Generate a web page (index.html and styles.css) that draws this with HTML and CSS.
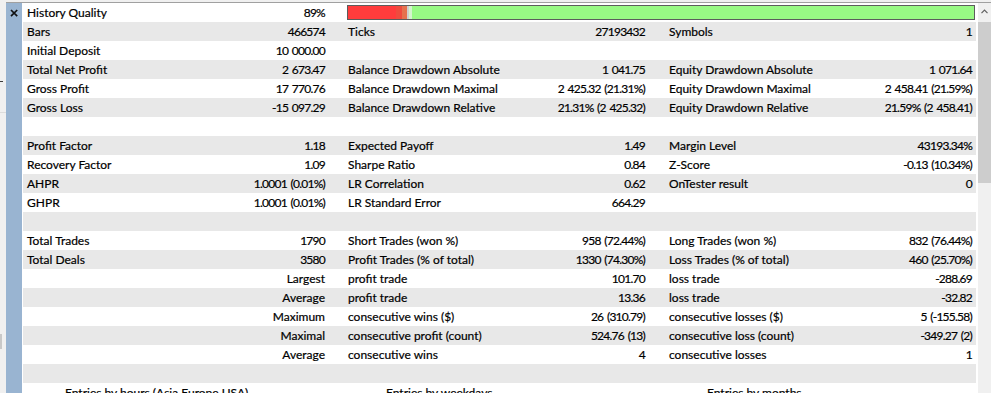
FILE: index.html
```html
<!DOCTYPE html>
<html>
<head>
<meta charset="utf-8">
<title>Backtest</title>
<link rel="stylesheet" href="styles.css">
</head>
<body>
<div class="frame">
  <div class="gutter">
    <div class="gutter-tick"></div>
    <div class="gutter-line"></div>
    <div class="gutter-box"></div>
  </div>
  <div class="panel">
    <div class="side">
      <svg class="close" width="8" height="8" viewBox="0 0 8 8"><path d="M1 1L7.2 7.2M7.2 1L1 7.2" stroke="#111" stroke-width="1.7" fill="none"/></svg>
    </div>
    <div class="report">
      <div class="row">
        <div class="cell c1"><span>History Quality</span><span>89%</span></div>
        <div class="bar-cell">
          <div class="bar">
            <i class="seg red" style="width:48px"></i>
            <i class="seg red2" style="width:6px"></i>
            <i class="seg orange" style="width:5px"></i>
            <i class="seg grey" style="width:2px"></i>
            <i class="seg pale" style="width:3px"></i>
            <i class="seg green"></i>
          </div>
        </div>
      </div>
      <div class="row">
        <div class="cell c1"><span>Bars</span><span>466574</span></div>
        <div class="cell c2"><span>Ticks</span><span>27193432</span></div>
        <div class="cell c3"><span>Symbols</span><span>1</span></div>
      </div>
      <div class="row">
        <div class="cell c1"><span>Initial Deposit</span><span>10 000.00</span></div>
        <div class="cell c2"></div>
        <div class="cell c3"></div>
      </div>
      <div class="row">
        <div class="cell c1"><span>Total Net Profit</span><span>2 673.47</span></div>
        <div class="cell c2"><span>Balance Drawdown Absolute</span><span>1 041.75</span></div>
        <div class="cell c3"><span>Equity Drawdown Absolute</span><span>1 071.64</span></div>
      </div>
      <div class="row">
        <div class="cell c1"><span>Gross Profit</span><span>17 770.76</span></div>
        <div class="cell c2"><span>Balance Drawdown Maximal</span><span>2 425.32 (21.31%)</span></div>
        <div class="cell c3"><span>Equity Drawdown Maximal</span><span>2 458.41 (21.59%)</span></div>
      </div>
      <div class="row">
        <div class="cell c1"><span>Gross Loss</span><span>-15 097.29</span></div>
        <div class="cell c2"><span>Balance Drawdown Relative</span><span>21.31% (2 425.32)</span></div>
        <div class="cell c3"><span>Equity Drawdown Relative</span><span>21.59% (2 458.41)</span></div>
      </div>
      <div class="row"></div>
      <div class="row">
        <div class="cell c1"><span>Profit Factor</span><span>1.18</span></div>
        <div class="cell c2"><span>Expected Payoff</span><span>1.49</span></div>
        <div class="cell c3"><span>Margin Level</span><span>43193.34%</span></div>
      </div>
      <div class="row">
        <div class="cell c1"><span>Recovery Factor</span><span>1.09</span></div>
        <div class="cell c2"><span>Sharpe Ratio</span><span>0.84</span></div>
        <div class="cell c3"><span>Z-Score</span><span>-0.13 (10.34%)</span></div>
      </div>
      <div class="row">
        <div class="cell c1"><span>AHPR</span><span>1.0001 (0.01%)</span></div>
        <div class="cell c2"><span>LR Correlation</span><span>0.62</span></div>
        <div class="cell c3"><span>OnTester result</span><span>0</span></div>
      </div>
      <div class="row">
        <div class="cell c1"><span>GHPR</span><span>1.0001 (0.01%)</span></div>
        <div class="cell c2"><span>LR Standard Error</span><span>664.29</span></div>
        <div class="cell c3"></div>
      </div>
      <div class="row"></div>
      <div class="row">
        <div class="cell c1"><span>Total Trades</span><span>1790</span></div>
        <div class="cell c2"><span>Short Trades (won %)</span><span>958 (72.44%)</span></div>
        <div class="cell c3"><span>Long Trades (won %)</span><span>832 (76.44%)</span></div>
      </div>
      <div class="row">
        <div class="cell c1"><span>Total Deals</span><span>3580</span></div>
        <div class="cell c2"><span>Profit Trades (% of total)</span><span>1330 (74.30%)</span></div>
        <div class="cell c3"><span>Loss Trades (% of total)</span><span>460 (25.70%)</span></div>
      </div>
      <div class="row">
        <div class="cell c1 end"><span>Largest</span></div>
        <div class="cell c2"><span>profit trade</span><span>101.70</span></div>
        <div class="cell c3"><span>loss trade</span><span>-288.69</span></div>
      </div>
      <div class="row">
        <div class="cell c1 end"><span>Average</span></div>
        <div class="cell c2"><span>profit trade</span><span>13.36</span></div>
        <div class="cell c3"><span>loss trade</span><span>-32.82</span></div>
      </div>
      <div class="row">
        <div class="cell c1 end"><span>Maximum</span></div>
        <div class="cell c2"><span>consecutive wins ($)</span><span>26 (310.79)</span></div>
        <div class="cell c3"><span>consecutive losses ($)</span><span>5 (-155.58)</span></div>
      </div>
      <div class="row">
        <div class="cell c1 end"><span>Maximal</span></div>
        <div class="cell c2"><span>consecutive profit (count)</span><span>524.76 (13)</span></div>
        <div class="cell c3"><span>consecutive loss (count)</span><span>-349.27 (2)</span></div>
      </div>
      <div class="row">
        <div class="cell c1 end"><span>Average</span></div>
        <div class="cell c2"><span>consecutive wins</span><span>4</span></div>
        <div class="cell c3"><span>consecutive losses</span><span>1</span></div>
      </div>
      <div class="row"></div>
      <div class="row">
        <div class="heading">Entries by hours (Asia Europe USA)</div>
        <div class="heading">Entries by weekdays</div>
        <div class="heading">Entries by months</div>
      </div>
    </div>
    <div class="scrollbar">
      <div class="scroll-btn">
        <svg width="7" height="5" viewBox="0 0 7 5"><path d="M0.5 4.2L3.5 1.2L6.5 4.2" stroke="#606060" stroke-width="1.2" fill="none"/></svg>
      </div>
      <div class="scroll-thumb"></div>
    </div>
  </div>
</div>
</body>
</html>
```

FILE: styles.css
```css
html, body {
  margin: 0;
  height: 100%;
  overflow: hidden;
}

body {
  background: #f0f0f0;
  font-family: Lato, "Noto Sans", sans-serif;
  font-size: 12px;
  color: #000;
  -webkit-text-stroke: 0.2px #000;
}

.frame {
  display: flex;
  height: 100%;
}

/* strip of the window behind, at the far left */
.gutter {
  width: 6px;
  flex: none;
  display: flex;
  flex-direction: column;
}

.gutter-tick {
  margin-top: 81px;
  width: 3px;
  height: 1px;
  background: #3a3a3a;
}

.gutter-line {
  margin-top: 30px;
  height: 1px;
  background: #dcdcdc;
}

.gutter-box {
  margin-top: 221px;
  width: 2px;
  height: 15px;
  background: #c8c8c8;
}

.panel {
  flex: 1;
  display: flex;
  margin-top: 2px;
  border-top: 1px solid #a0a0a0;
  background: #fff;
}

.side {
  width: 16px;
  flex: none;
  background: #99b4d1;
  display: flex;
  justify-content: center;
  padding: 6px 1px 0 0;
  box-sizing: border-box;
}

.close {
  display: block;
}

.report {
  width: 953px;
  margin-left: 1px;
  flex: none;
}

.row {
  display: grid;
  grid-template-columns: 321px 321px 1fr;
  height: 19px;
  line-height: 19px;
  white-space: nowrap;
}

.row:nth-child(even) {
  background: #e8e8e8;
}

.cell {
  display: flex;
  justify-content: space-between;
  padding-left: 4px;
}

/* figures are set tighter than the captions */
.cell span:nth-child(2) {
  letter-spacing: -0.75px;
  word-spacing: 1.3px;
}

.c1 { padding-right: 19px; }
.c2 { padding-right: 20px; }
.c3 { padding-right: 4px; }

.cell.end {
  justify-content: flex-end;
}

.heading {
  padding-left: 42px;
}

.bar-cell {
  grid-column: 2 / 4;
  padding: 2px 1px 0 3px;
}

.bar {
  display: flex;
  height: 13px;
  border: 1px solid #5c5c5c;
}

.seg {
  display: block;
  flex: none;
  height: 100%;
}

.red { background: #ff3c3c; }
.red2 { background: #ef4b3e; }
.orange { background: #e6714e; }
.grey { background: #cfcfcf; }
.pale { background: #d4f3cc; }
.green { flex: 1; background: #98f984; }

.scrollbar {
  width: 13px;
  flex: none;
  margin-left: 2px;
  background: #f0f0f0;
  display: flex;
  flex-direction: column;
}

.scroll-btn {
  height: 19px;
  display: flex;
  justify-content: center;
  align-items: center;
  padding-right: 1px;
  padding-bottom: 3px;
  box-sizing: border-box;
}

.scroll-btn svg {
  display: block;
}

.scroll-thumb {
  height: 161px;
  background: #cdcdcd;
}
```
